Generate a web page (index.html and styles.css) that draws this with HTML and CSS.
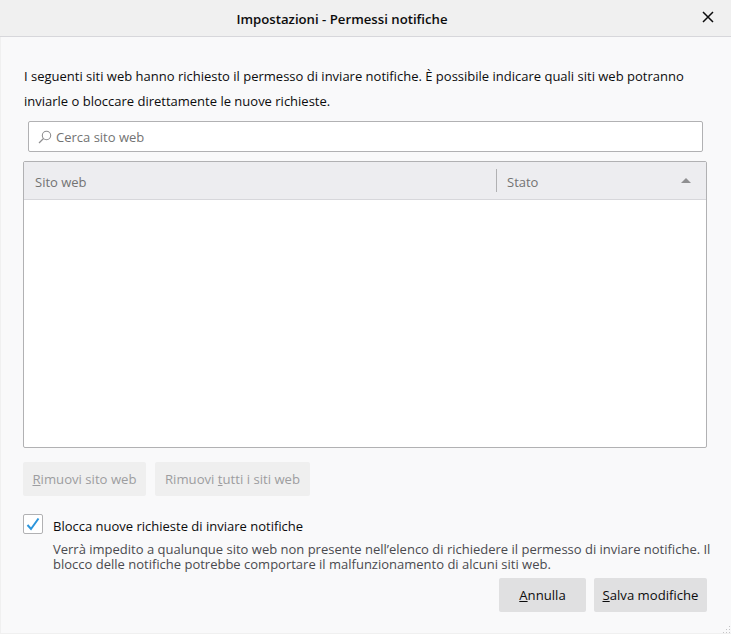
FILE: index.html
```html
<!DOCTYPE html>
<html lang="it">

<head>
    <meta charset="UTF-8">
    <title>Impostazioni - Permessi notifiche</title>
    <link rel="stylesheet" href="styles.css">
</head>

<body>
    <div class="window">
        <div class="titlebar">
            <span class="title">Impostazioni - Permessi notifiche</span>
            <button class="close" type="button" aria-label="Chiudi">
                <svg width="12" height="12" viewBox="0 0 12 12">
                    <path d="M1 1 L11 11 M11 1 L1 11" stroke="#0c0c0d" stroke-width="1.5" fill="none" />
                </svg>
            </button>
        </div>
        <div class="content">
            <p class="intro">I seguenti siti web hanno richiesto il permesso di inviare notifiche. È possibile indicare quali siti web potranno inviarle o bloccare direttamente le nuove richieste.</p>
            <div class="search">
                <svg width="14" height="14" viewBox="0 0 14 14">
                    <circle cx="8.5" cy="5.5" r="4.2" stroke="#8f8f91" stroke-width="1.1" fill="none" />
                    <path d="M5.5 8.5 L1 13" stroke="#8f8f91" stroke-width="1.3" fill="none" />
                </svg>
                <span>Cerca sito web</span>
            </div>
            <div class="table">
                <div class="table-head">
                    <div class="col col-site">Sito web</div>
                    <div class="col col-state">
                        <span>Stato</span>
                        <span class="sort"></span>
                    </div>
                </div>
                <div class="table-body"></div>
            </div>
            <div class="actions">
                <button class="btn btn-remove" type="button" disabled><u>R</u>imuovi sito web</button>
                <button class="btn btn-remove-all" type="button" disabled>Rimuovi <u>t</u>utti i siti web</button>
            </div>
            <div class="block">
                <span class="checkbox">
                    <svg width="14" height="14" viewBox="0 0 14 14">
                        <path d="M1.5 8 L5 12 L12.5 1.5" stroke="#2b95dc" stroke-width="2" fill="none" />
                    </svg>
                </span>
                <span class="block-label">Blocca nuove richieste di inviare notifiche</span>
            </div>
            <p class="desc">Verrà impedito a qualunque sito web non presente nell’elenco di richiedere il permesso di inviare notifiche. Il blocco delle notifiche potrebbe comportare il malfunzionamento di alcuni siti web.</p>
            <div class="footer">
                <button class="btn btn-main btn-cancel" type="button"><u>A</u>nnulla</button>
                <button class="btn btn-main btn-save" type="button"><u>S</u>alva modifiche</button>
            </div>
        </div>
        <svg class="grip" width="8" height="8" viewBox="0 0 8 8">
            <path d="M6 1h1v1H6z M3 4h1v1H3z M6 4h1v1H6z M0 7h1v1H0z M3 7h1v1H3z M6 7h1v1H6z" fill="#c4c4c6" />
        </svg>
    </div>
</body>

</html>
```

FILE: styles.css
```css
html,
body {
    margin: 0;
    padding: 0;
}

body {
    font-family: "Open Sans", "Noto Sans", sans-serif;
    font-size: 13px;
    color: #0c0c0d;
    background-color: #f9f9fa;
}

.window {
    width: 731px;
    height: 634px;
    display: flex;
    flex-direction: column;
    box-sizing: border-box;
    overflow: hidden;
    position: relative;
    border-bottom: 1px solid #f0f0f0;
}

.titlebar {
    height: 37px;
    box-sizing: border-box;
    display: flex;
    align-items: center;
    justify-content: center;
    position: relative;
    padding-right: 47px;
    background-color: #f0f0f0;
    border-bottom: 1px solid #d7d7db;
}

.title {
    font-weight: 600;
    font-size: 13.2px;
    margin-top: 1px;
}

.close {
    position: absolute;
    right: 17px;
    top: 11px;
    width: 12px;
    height: 12px;
    padding: 0;
    border: none;
    background: none;
    display: flex;
}

.content {
    flex: 1;
    padding: 27px 24px 0 22px;
    border-left: 1px solid #f0f0f0;
    box-sizing: border-box;
}

.intro {
    margin: 0 0 0 1px;
    line-height: 25px;
    width: 690px;
}

.search {
    margin: 7px 4px 0 5px;
    height: 31px;
    box-sizing: border-box;
    display: flex;
    align-items: center;
    gap: 4px;
    padding-left: 9px;
    background-color: #fff;
    border: 1px solid #b1b1b3;
    border-radius: 2px;
    color: #737373;
}

.table {
    margin: 9px 0 0 0;
    height: 287px;
    box-sizing: border-box;
    display: flex;
    flex-direction: column;
    background-color: #fff;
    border: 1px solid #b1b1b3;
    border-radius: 2px;
}

.table-head {
    height: 38px;
    box-sizing: border-box;
    display: flex;
    align-items: center;
    background-color: #ededf0;
    border-bottom: 1px solid #d7d7db;
    color: #737373;
}

.col {
    height: 23px;
    display: flex;
    align-items: center;
    box-sizing: border-box;
    padding-top: 2px;
}

.col-site {
    width: 472px;
    padding-left: 11px;
}

.col-state {
    flex: 1;
    justify-content: space-between;
    padding-left: 10px;
    padding-right: 15px;
    border-left: 1px solid #b1b1b3;
}

.sort {
    width: 0;
    height: 0;
    margin-bottom: 3px;
    border-left: 5px solid transparent;
    border-right: 5px solid transparent;
    border-bottom: 5px solid #8f8f91;
}

.table-body {
    flex: 1;
}

.actions {
    display: flex;
    gap: 9px;
    margin-top: 14px;
}

.btn {
    height: 34px;
    padding: 0;
    border: none;
    border-radius: 2px;
    font-family: inherit;
    font-size: 13.15px;
    background-color: #efefef;
    color: #9d9d9f;
}

.btn-remove {
    width: 123px;
}

.btn-remove-all {
    width: 155px;
}

.block {
    display: flex;
    align-items: flex-start;
    gap: 10px;
    height: 20px;
    margin-top: 18px;
}

.checkbox {
    width: 20px;
    height: 20px;
    box-sizing: border-box;
    display: flex;
    align-items: center;
    justify-content: center;
    background-color: #fff;
    border: 1px solid #b1b1b3;
    border-radius: 2px;
}

.block-label {
    line-height: 20px;
    margin-top: 2px;
}

.desc {
    margin: 8px 0 0 30px;
    line-height: 15px;
    color: #4a4a4f;
    width: 660px;
}

.footer {
    display: flex;
    justify-content: flex-end;
    gap: 8px;
    margin-top: 6px;
}

.btn-main {
    background-color: #e0e0e1;
    color: #0c0c0d;
}

.btn-cancel {
    width: 87px;
}

.btn-save {
    width: 113px;
}

.grip {
    position: absolute;
    right: 0;
    bottom: 0;
}
```
